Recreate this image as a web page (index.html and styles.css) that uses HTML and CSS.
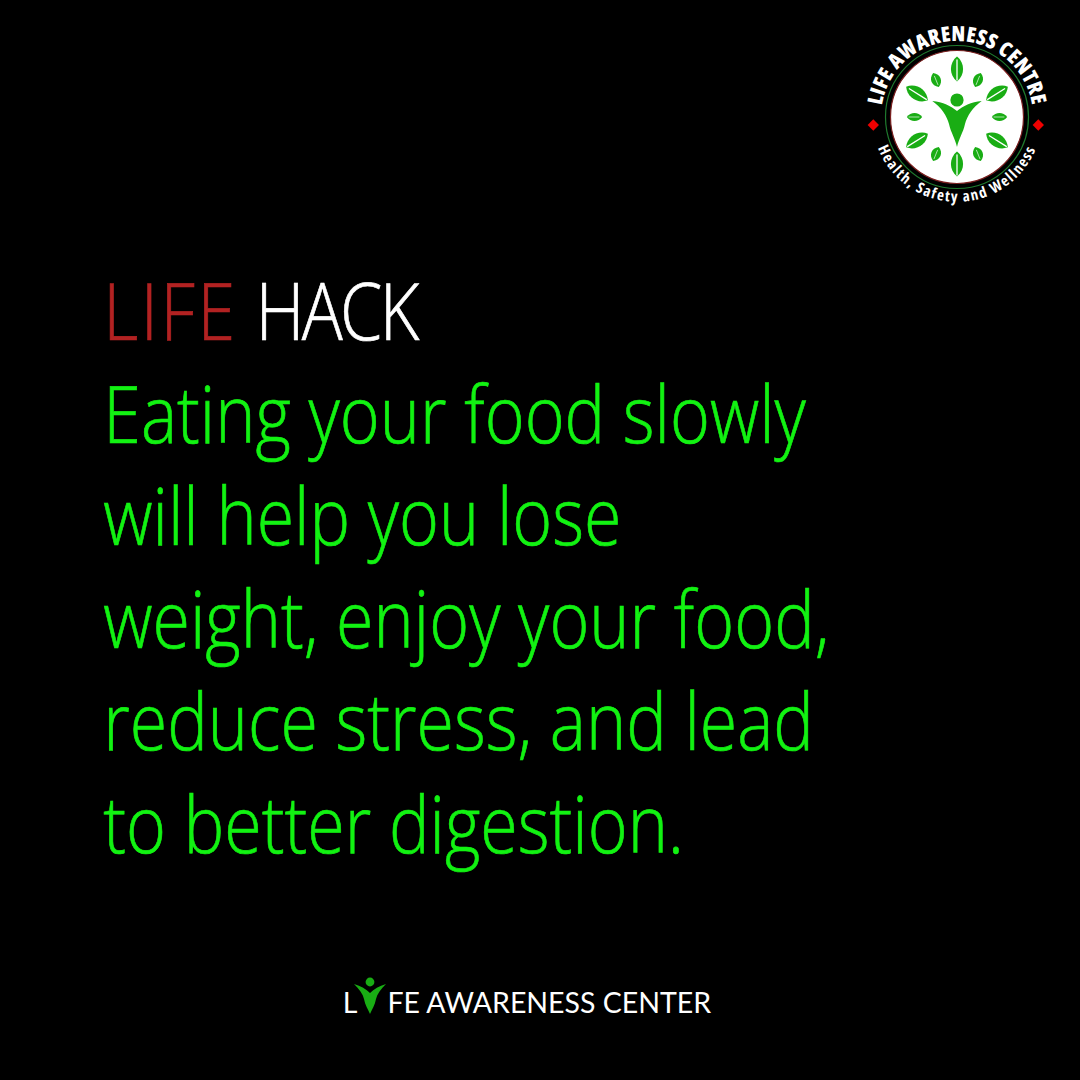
FILE: index.html
```html
<!DOCTYPE html>
<html lang="en">
<head>
<meta charset="utf-8">
<title>Life Hack</title>
<link rel="stylesheet" href="styles.css">
</head>
<body>
<div class="page">
  <header class="top">
    <svg class="badge" viewBox="0 0 200 200" width="200" height="200" aria-label="Life Awareness Centre">
      <defs>
        <path id="arcTop" d="M 28.6 116.7 A 76 76 0 1 1 175.4 116.7"/>
        <path id="arcBottom" d="M 19.9 119 A 85 85 0 0 0 184.1 119"/>
        <path id="leaf" d="M0 -16 C 9 -8 9 8 0 16 C -9 8 -9 -8 0 -16 Z"/>
        <path id="vein" d="M0 -9 L0 11"/>
      </defs>
      <circle cx="102" cy="97" r="71.5" fill="none" stroke="#1f7a2e" stroke-width="1.2"/>
      <circle cx="102" cy="97" r="66.5" fill="#fff" stroke="#7a1f1f" stroke-width="1.2"/>
      <g fill="#19ad14">
        <use href="#leaf" transform="translate(102 49) scale(.9 .78)"/>
        <use href="#leaf" transform="translate(102 144) scale(.9 .78)"/>
        <use href="#leaf" transform="translate(81 60) rotate(-22) scale(.72 .47)"/>
        <use href="#leaf" transform="translate(123 60) rotate(22) scale(.72 .47)"/>
        <use href="#leaf" transform="translate(81 134) rotate(22) scale(.72 .47)"/>
        <use href="#leaf" transform="translate(123 134) rotate(-22) scale(.72 .47)"/>
        <use href="#leaf" transform="translate(62 73.5) rotate(-58) scale(.95 .8)"/>
        <use href="#leaf" transform="translate(142 73.5) rotate(58) scale(.95 .8)"/>
        <use href="#leaf" transform="translate(62 120.5) rotate(58) scale(.95 .8)"/>
        <use href="#leaf" transform="translate(142 120.5) rotate(-58) scale(.95 .8)"/>
        <use href="#leaf" transform="translate(59.5 97) rotate(90) scale(.6 .48)"/>
        <use href="#leaf" transform="translate(144.5 97) rotate(90) scale(.6 .48)"/>
        <circle cx="102" cy="80" r="6.6"/>
        <path d="M126.7 81 C 116 82 108 86 102 91 C 96 86 88 82 77.3 81 C 86 87 92 96 94 104 C 96 113 100 118 102 127 C 104 118 108 113 110 104 C 112 96 118 87 126.7 81 Z"/>
      </g>
      <g class="veins">
        <use href="#vein" transform="translate(102 49)"/>
        <use href="#vein" transform="translate(102 144)"/>
        <use href="#vein" transform="translate(81 60) rotate(-22) scale(.45)"/>
        <use href="#vein" transform="translate(123 60) rotate(22) scale(.45)"/>
        <use href="#vein" transform="translate(81 134) rotate(22) scale(.45)"/>
        <use href="#vein" transform="translate(123 134) rotate(-22) scale(.45)"/>
        <use href="#vein" transform="translate(62 73.5) rotate(-58) scale(1)"/>
        <use href="#vein" transform="translate(142 73.5) rotate(58) scale(1)"/>
        <use href="#vein" transform="translate(62 120.5) rotate(58) scale(1)"/>
        <use href="#vein" transform="translate(142 120.5) rotate(-58) scale(1)"/>
        <use href="#vein" transform="translate(59.5 97) rotate(90) scale(.5)"/>
        <use href="#vein" transform="translate(144.5 97) rotate(90) scale(.5)"/>
      </g>
      <rect x="14.3" y="101" width="8" height="8" fill="#f00000" transform="rotate(45 18.3 105)"/>
      <rect x="179.3" y="101" width="8" height="8" fill="#f00000" transform="rotate(45 183.3 105)"/>
      <text class="arc-top"><textPath href="#arcTop" startOffset="50%" text-anchor="middle">LIFE AWARENESS CENTRE</textPath></text>
      <text class="arc-bottom"><textPath href="#arcBottom" startOffset="50%" text-anchor="middle">Health, Safety and Wellness</textPath></text>
    </svg>
  </header>
  <main class="copy">
    <h1 class="title"><span class="red">LIFE</span> <span class="hack">HACK</span></h1>
    <p class="body-text">Eating your food slowly<br>will help you lose<br>weight, enjoy your food,<br>reduce stress, and lead<br>to better digestion.</p>
  </main>
  <footer class="foot">
    <span class="brand">L<svg class="brand-icon" viewBox="0 0 34 38" width="34" height="38" aria-hidden="true"><circle cx="17" cy="5" r="4.4" fill="#19ad14"/><path d="M33 7 C 26 9 21 12 17 16 C 13 12 8 9 1 7 C 6 12 10 17 11 22 C 12 28 15 32 17 37 C 19 32 22 28 23 22 C 24 17 28 12 33 7 Z" fill="#19ad14"/></svg>FE AWARENESS CENTER</span>
  </footer>
</div>
</body>
</html>
```
FILE: styles.css
```css
* { box-sizing: border-box; }
html, body { margin: 0; padding: 0; background: #000; }
.page {
  width: 1080px;
  height: 1080px;
  background: #000;
  display: flex;
  flex-direction: column;
  overflow: hidden;
}
.top {
  display: flex;
  justify-content: flex-end;
  padding: 20px 25px 0 0;
  height: 259px;
}
.badge { display: block; }
.veins { stroke: #fff; stroke-width: 1.3; fill: none; stroke-linecap: round; }
.arc-top {
  font-family: "Open Sans", sans-serif;
  font-weight: 800;
  font-stretch: 75%;
  font-size: 21px;
  letter-spacing: .3px;
  fill: #fff;
}
.arc-bottom {
  font-family: "Open Sans", sans-serif;
  font-weight: 700;
  font-stretch: 75%;
  font-size: 15px;
  letter-spacing: 1.6px;
  fill: #fff;
}
.copy {
  padding-left: 119px;
  font-family: "Open Sans", sans-serif;
  font-weight: 300;
  font-size: 78.5px;
  line-height: 102.5px;
  color: #12f212;
  -webkit-text-stroke: .7px currentColor;
  transform: scaleX(.868);
  transform-origin: 0 0;
  white-space: nowrap;
}
.title, .body-text { margin: 0; font: inherit; }
.title { color: #fff; }
.red { color: #b22222; letter-spacing: 3px; }
.hack { letter-spacing: -3px; }
.foot {
  display: flex;
  justify-content: center;
  margin-top: 103px;
  padding-right: 26px;
}
.brand {
  display: flex;
  align-items: flex-end;
  font-family: "Lato", sans-serif;
  font-size: 28.5px;
  line-height: 38px;
  color: #fff;
}
.brand-icon { margin: 0 0 6px -4px; }
```
